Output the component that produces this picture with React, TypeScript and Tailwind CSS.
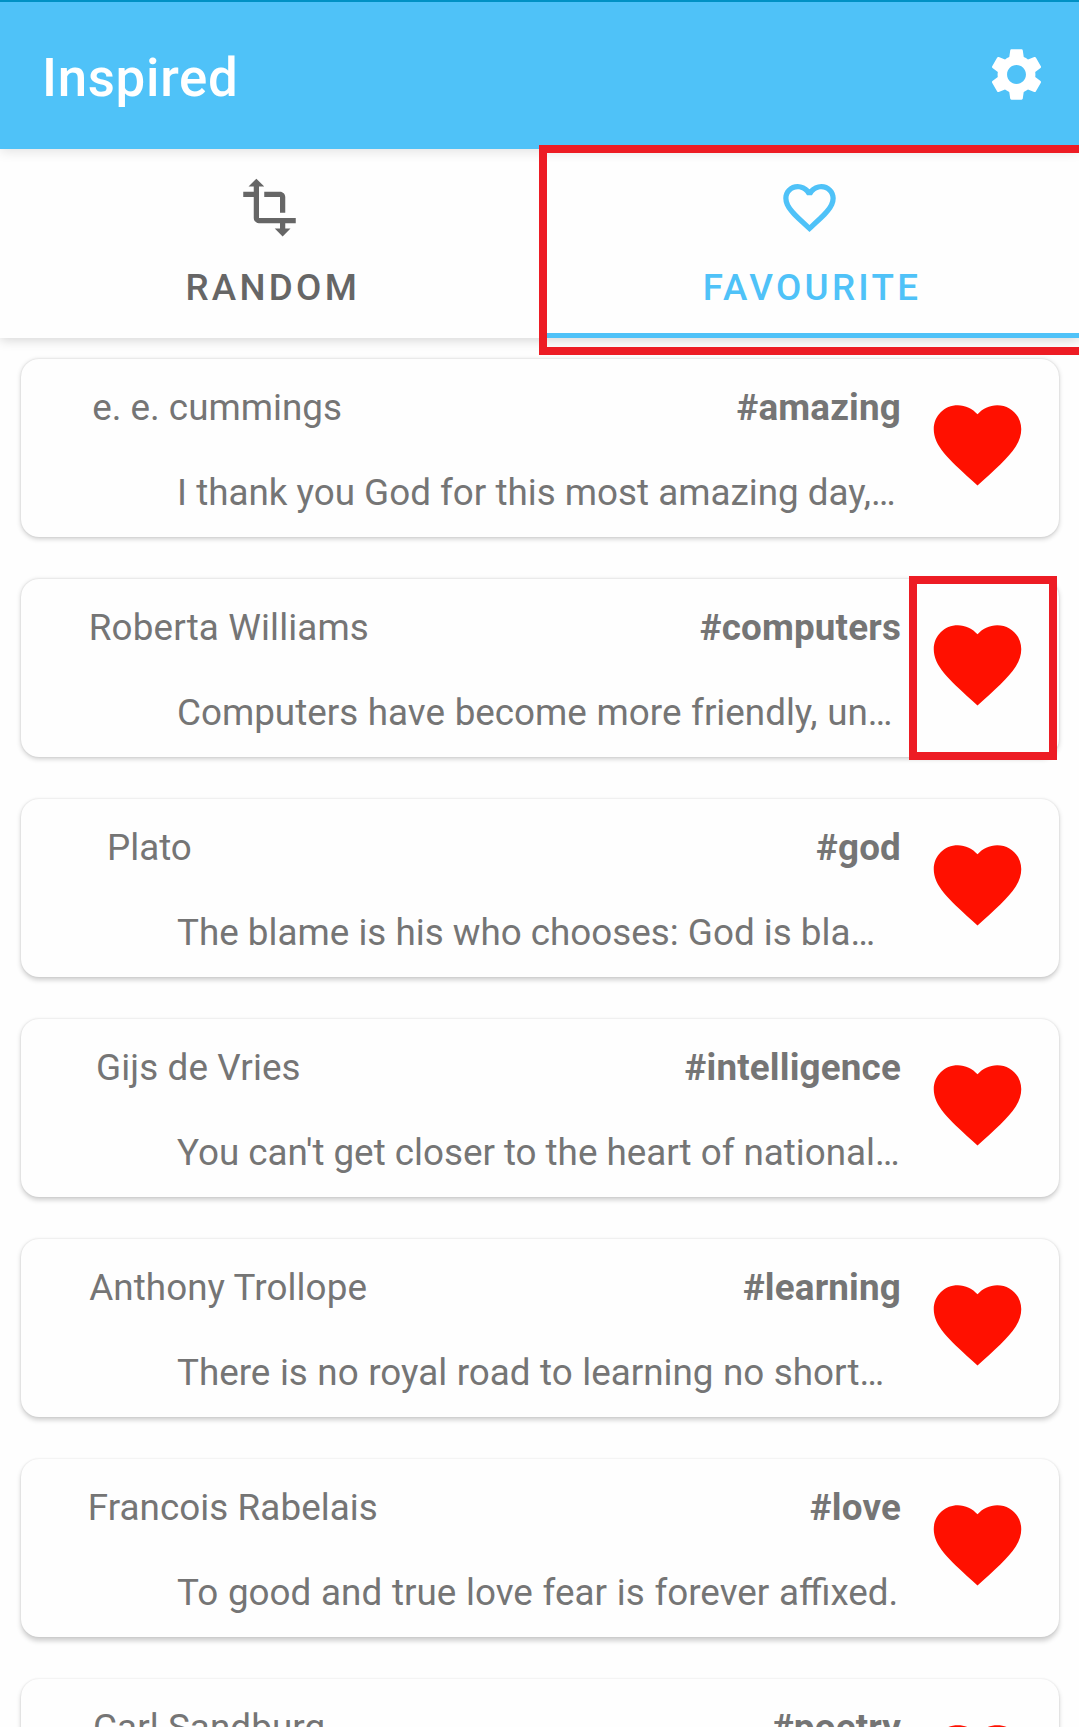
import React from "react";
import { MdFavorite, MdFavoriteBorder, MdSettings, MdTransform } from "react-icons/md";

type Quote = {
  author: string;
  inset: number;
  tag: string;
  text?: string;
  authorTracking?: number;
  wordGap?: number;
  marked?: boolean;
};

const quotes: Quote[] = [
  { author: "e. e. cummings", inset: 71.2, tag: "#amazing", text: "I thank you God for this most amazing day,…" },
  { author: "Roberta Williams", inset: 67.8, authorTracking: 0.13, tag: "#computers", text: "Computers have become more friendly, un…", wordGap: 0.55, marked: true },
  { author: "Plato", inset: 86, tag: "#god", text: "The blame is his who chooses: God is bla…" },
  { author: "Gijs de Vries", inset: 75, authorTracking: 0.12, tag: "#intelligence", text: "You can't get closer to the heart of national…", wordGap: -0.1 },
  { author: "Anthony Trollope", inset: 68.2, authorTracking: 0.08, tag: "#learning", text: "There is no royal road to learning no short…", wordGap: 0.4 },
  { author: "Francois Rabelais", inset: 66.8, authorTracking: 0.06, tag: "#love", text: "To good and true love fear is forever affixed.", wordGap: 0.65 },
  { author: "Carl Sandburg", inset: 72, authorTracking: 0.08, tag: "#poetry" },
];

function QuoteCard({ quote, index }: { quote: Quote; index: number }) {
  const drop = 1.5 + index * 0.35;
  return (
    <article
      className="relative flex h-[178px] w-[1038px] shrink-0 items-start rounded-[18px] bg-[#fefefe] pt-[27px] text-[36.8px] leading-[43px] text-[#757575]"
      style={{ boxShadow: `0 ${drop}px 5px rgba(0,0,0,0.19), 0 0 2px rgba(0,0,0,0.11)` }}
    >
      <div className="flex w-[880px] flex-col gap-[42px]">
        <div className="flex justify-between whitespace-nowrap" style={{ paddingLeft: quote.inset }}>
          <span style={{ letterSpacing: quote.authorTracking }}>{quote.author}</span>
          <span className="font-bold tracking-[0.17px]">{quote.tag}</span>
        </div>
        {quote.text && (
          <p className="whitespace-nowrap pl-[156px]" style={{ wordSpacing: quote.wordGap }}>
            {quote.text}
          </p>
        )}
      </div>
      <MdFavorite className="ml-[24px] mt-[6px] size-[105px] shrink-0 text-[#ff1000]" />
      {quote.marked && (
        <div className="absolute -top-[3px] left-[888px] h-[184px] w-[148px] border-8 border-[#ed1c24]" />
      )}
    </article>
  );
}

export default function App() {
  return (
    <div className="flex h-[1727px] w-[1079px] flex-col overflow-hidden bg-[#fefefe] font-['Roboto',sans-serif]">
      <header className="relative z-20 flex h-[149px] shrink-0 items-start justify-between border-t-2 border-[#0091c4] bg-[#4fc2f8] pl-[42px] pr-[31px] text-white shadow-[0_2px_12px_rgba(0,0,0,0.12)]">
        <h1 className="mt-[45px] text-[52.8px] font-medium leading-[62px] tracking-[0.7px]">Inspired</h1>
        <MdSettings className="mt-[41px] size-[63px]" />
      </header>
      <nav className="relative z-30 flex h-[189px] shrink-0 text-[36.75px] font-medium leading-[43px] tracking-[3.28px]">
        <div className="relative flex w-[539.5px] flex-col items-center pt-[27px] text-[#666666]">
          <MdTransform className="size-[63px]" />
          <span className="mt-[27px] pl-[6px]">RANDOM</span>
        </div>
        <div className="relative flex w-[539.5px] flex-col items-center border-b-[5px] border-[#4fc2f8] pt-[27px] text-[#4fc2f8]">
          <MdFavoriteBorder className="size-[63px]" />
          <span className="mt-[27px] pl-[5.5px]">FAVOURITE</span>
        </div>
        <div className="absolute -top-1 left-[539px] h-[210px] w-[548px] border-8 border-[#ed1c24]" />
      </nav>
      <main className="relative flex flex-1 flex-col items-start gap-[42px] overflow-hidden pl-[21px] pt-[21px]">
        <div className="absolute -top-[20px] left-0 h-[20px] w-full shadow-[0_2px_12px_rgba(0,0,0,0.17)]" />
        {quotes.map((quote, index) => (
          <QuoteCard key={quote.tag} quote={quote} index={index} />
        ))}
      </main>
    </div>
  );
}
